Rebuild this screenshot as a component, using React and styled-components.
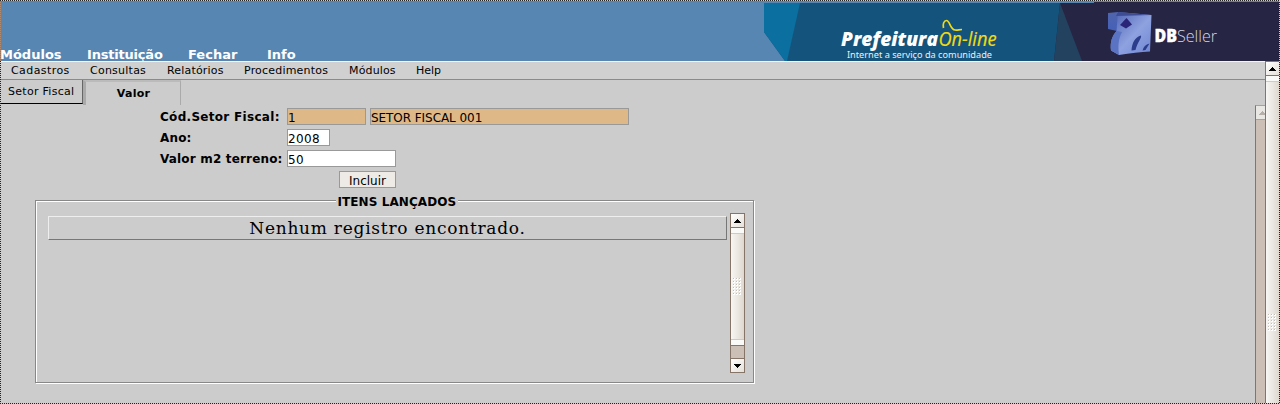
import React from "react";
import styled, { createGlobalStyle } from "styled-components";

const Global = createGlobalStyle`
  * { box-sizing: border-box; }
  html, body { margin: 0; padding: 0; overflow: hidden; }
  body { font-family: "DejaVu Sans", sans-serif; color: #000; background: #ccc; }
`;

const Page = styled.div`
  position: relative;
  width: 1280px;
  height: 404px;
  display: flex;
  flex-direction: column;
  overflow: hidden;
  background: #ccc;
`;

const FocusFrame = styled.div`
  position: absolute;
  inset: 0;
  pointer-events: none;
  --dots: #222 0 1px, #ccc 1px 2px;
  background:
    repeating-linear-gradient(90deg, var(--dots)) 0 0 / 100% 1px no-repeat,
    repeating-linear-gradient(90deg, var(--dots)) 0 100% / 100% 1px no-repeat,
    repeating-linear-gradient(180deg, #b08a70 0 1px, #5786b2 1px 2px) 0 0 / 1px 61px no-repeat,
    repeating-linear-gradient(180deg, var(--dots)) 0 61px / 1px 343px no-repeat,
    repeating-linear-gradient(180deg, var(--dots)) 100% 0 / 1px 100% no-repeat;
`;

const Header = styled.header`
  display: flex;
  justify-content: space-between;
  height: 61px;
  background: #5786b2;
`;

const TopNav = styled.nav`
  display: flex;
  align-items: flex-end;
`;

const TopLink = styled.a`
  width: ${(p) => p.$width}px;
  height: 14px;
  font-size: 13px;
  font-weight: bold;
  line-height: 15px;
  color: #fff;
  white-space: nowrap;
  letter-spacing: ${(p) => p.$track || 0}px;
`;

const BannerArt = styled.svg`
  display: block;
  width: 516px;
  height: 61px;
`;

const Body = styled.div`
  display: flex;
  flex: 1;
  min-height: 0;
`;

const Main = styled.main`
  flex: 1;
  min-width: 0;
  display: flex;
  flex-direction: column;
`;

const MenuBar = styled.nav`
  display: flex;
  height: 19px;
  padding-left: 11px;
  background: #d0d0d0;
  border-top: 1px solid #f4f4f4;
  border-bottom: 1px solid #8a8a8a;
`;

const MenuItem = styled.a`
  width: ${(p) => p.$width}px;
  font-size: 11px;
  line-height: 17px;
  white-space: nowrap;
  letter-spacing: ${(p) => p.$track || 0}px;
`;

const Tabs = styled.div`
  display: flex;
  height: 25px;
`;

const Tab = styled.div`
  width: 83px;
  height: 24px;
  padding-left: 8px;
  font-size: 11px;
  line-height: 23px;
  letter-spacing: 0.28px;
  white-space: nowrap;
  border-right: 1px solid #666;
  border-bottom: 1px solid #000;
`;

const ActiveTab = styled(Tab)`
  width: 98px;
  height: 25px;
  padding: 0 0 0 1px;
  text-align: center;
  font-weight: bold;
  line-height: 23px;
  border-top: 2px solid #bbb;
  border-left: 3px solid #aaa;
  border-right: 1px solid #aaa;
  border-bottom: 0;
`;

const Frame = styled.section`
  display: flex;
  flex: 1;
  min-height: 0;
`;

const FrameContent = styled.div`
  flex: 1;
  padding: 3px 0 0 35px;
`;

const Form = styled.div`
  display: grid;
  grid-template-columns: 127px auto;
  row-gap: 4px;
  padding-left: 125px;
`;

const Label = styled.label`
  height: 17px;
  font-size: 12px;
  font-weight: bold;
  line-height: 19px;
  white-space: nowrap;
  letter-spacing: ${(p) => p.$track || 0}px;
`;

const Fields = styled.div`
  display: flex;
  gap: 4px;
`;

const Field = styled.input`
  width: ${(p) => p.$width}px;
  height: 17px;
  margin: 0;
  padding: 2px 0 0 0;
  border: 1px solid #999;
  border-radius: 0;
  outline: 0;
  font: 12px "DejaVu Sans", sans-serif;
  letter-spacing: ${(p) => p.$track || 0}px;
  color: #000;
  background: ${(p) => (p.$locked ? "#deb887" : "#fff")};
`;

const Submit = styled.button`
  width: 57px;
  height: 17px;
  margin: 0 0 0 52px;
  padding: 1px 0 0;
  border: 1px solid #999;
  background: #eeebe7;
  font: 12px/16px "DejaVu Sans", sans-serif;
  color: #000;
`;

const Items = styled.fieldset`
  display: flex;
  width: 719px;
  height: 190px;
  min-width: 0;
  margin: 5px 0 0;
  padding: 5px 8px 9px 12px;
  border: 1px solid #888;
  box-shadow: 1px 1px 0 #fff, inset 1px 1px 0 #fff;
`;

const Legend = styled.legend`
  margin: 0 auto;
  width: 122px;
  padding: 0 0 0 2px;
  height: 15px;
  font-size: 12px;
  font-weight: bold;
  line-height: 18px;
  letter-spacing: 0.08px;
  white-space: nowrap;
  background: #ccc;
`;

const ItemsRow = styled.div`
  width: 679px;
  height: 24px;
  margin: 3px 3px 0 0;
  border: 1px solid;
  border-color: #eee #777 #777 #eee;
  font: 17px/22px "DejaVu Serif", serif;
  letter-spacing: 0.75px;
  text-align: center;
`;

const Scrollbar = styled.div`
  display: flex;
  flex-direction: column;
  width: 15px;
  height: ${(p) => p.$height}px;
  flex: none;
  overflow: hidden;
  border: 1px solid #857568;
  background: #ccc0b6;
`;

const OuterScrollbar = styled(Scrollbar)`
  border-bottom: 0;
`;

const FrameScrollbar = styled(Scrollbar)`
  width: 10px;
  border-right: 0;
  border-bottom: 0;
  border-top-color: #aaa096;
`;

const Arrow = styled.div`
  flex: none;
  display: flex;
  align-items: center;
  justify-content: center;
  width: 13px;
  height: ${(p) => (p.$down ? 14 : 13)}px;
  border-top: ${(p) => (p.$down ? "1px solid #857568" : "0")};
  background: linear-gradient(135deg, #fff, #e5e0d9);
`;

const DisabledArrow = styled(Arrow)`
  height: 14px;
  border-bottom: 1px solid #aaa096;
  background: #e9e7e3;
`;

const Thumb = styled.div`
  flex: none;
  display: flex;
  justify-content: center;
  width: 13px;
  height: ${(p) => p.$height}px;
  padding-top: ${(p) => p.$grip}px;
  border: solid #857568;
  border-width: 1px 0;
  background:
    linear-gradient(#fafaf8, #fafaf8) 0 0 / 100% 5px no-repeat,
    linear-gradient(#cfcac3, #cfcac3) 0 5px / 100% 1px no-repeat,
    linear-gradient(#fafaf8, #fafaf8) 0 100% / 100% 5px no-repeat,
    linear-gradient(#cfcac3, #cfcac3) 0 calc(100% - 5px) / 100% 1px no-repeat,
    linear-gradient(90deg, #f8f7f5, #ded8cf);
`;

const Spacer = styled.div`
  flex: 1;
`;

const Triangle = ({ down, muted }) => (
  <svg width="7" height="4" viewBox="0 0 7 4" shapeRendering="crispEdges">
    <path
      d={down ? "M0 0h7v1h-1v1h-1v1h-1v1h-1v-1h-1v-1h-1v-1h-1z" : "M3 0h1v1h1v1h1v1h1v1h-7v-1h1v-1h1v-1h1z"}
      fill={muted ? "#b5afa7" : "#000"}
    />
  </svg>
);

const Grip = () => (
  <svg width="9" height="18" viewBox="0 0 9 18" shapeRendering="crispEdges">
    {[0, 3, 6, 9, 12, 15].map((y) =>
      [0, 3, 6].map((x) => (
        <g key={`${x}-${y}`}>
          <rect x={x} y={y} width="2" height="2" fill="#fff" />
          <rect x={x} y={y} width="1" height="1" fill="#c4beb6" />
        </g>
      ))
    )}
  </svg>
);

const Banner = () => (
  <BannerArt viewBox="764 0 516 61">
    <defs>
      <linearGradient id="cube" x1="0" y1="0" x2="1" y2="1">
        <stop offset="0" stopColor="#4a5fb0" />
        <stop offset=".55" stopColor="#8ea2e0" />
        <stop offset="1" stopColor="#6f86d2" />
      </linearGradient>
      <linearGradient id="cubeSide" x1="0" y1="0" x2="0" y2="1">
        <stop offset="0" stopColor="#5065ad" />
        <stop offset="1" stopColor="#4560b8" />
      </linearGradient>
    </defs>
    <path d="M764 3H1062V61H785L764 32Z" fill="#14547c" />
    <path d="M764 3H800L787 61H785L764 32Z" fill="#0b6f9f" />
    <path d="M1060 3H1094V2H1280V61H1054Z" fill="#262543" />
    <path d="M1060 3L1082 61H1054Z" fill="#234260" />
    <g fontFamily="'Open Sans', sans-serif" fontStyle="italic">
      <text x="841" y="46" fontSize="19" fontWeight="800" fill="#fff" textLength="97" lengthAdjust="spacingAndGlyphs">Prefeitura</text>
      <text x="938.5" y="46" fontSize="20" fill="#f2db12" stroke="#f2db12" strokeWidth=".2" textLength="58" lengthAdjust="spacingAndGlyphs">On-line</text>
    </g>
    <path d="M943.5 28C942.5 24 944 20.5 946.5 20.5C950 20.5 950 29.5 955 30C958 30.3 959 29.5 962 29.5" fill="none" stroke="#f2db12" strokeWidth="1.7" />
    <text x="847" y="57.5" fontFamily="'Noto Sans', sans-serif" fontSize="9" fill="#e8f0f5" textLength="145" lengthAdjust="spacingAndGlyphs">Internet a serviço da comunidade</text>
    <path d="M1108 13L1118 12L1122 17L1117 31L1108 29Z" fill="url(#cubeSide)" />
    <path d="M1118 12L1151.500 15L1150 51.500Q1136 52 1119 55L1111 50.500C1110 42 1112 36 1116.500 31Z" fill="url(#cube)" />
    <path d="M1111 50.500C1110 42 1112 36 1116.500 31L1122 32C1118 39 1118 47 1119 55Z" fill="#5a73c2" />
    <path d="M1118 12L1151.500 15L1116 16Z" fill="#3d4c94" />
    <path d="M1120 25L1126.500 18L1132 24.500L1126 28.500Z" fill="#2b2579" />
    <path d="M1131.500 50.500C1132 43 1135 37 1141 35.500C1142 38 1137.500 42 1135.500 50ZM1142.500 50.500C1143.500 47 1145.500 44.500 1149.500 43.500L1145.500 50Z" fill="#2c3d8c" />
    <g fontFamily="'Open Sans', sans-serif">
      <text x="1154.500" y="42" fontSize="17.500" fontWeight="800" fill="#fff" stroke="#fff" strokeWidth=".4" textLength="22.500" lengthAdjust="spacingAndGlyphs">DB</text>
      <text x="1177" y="42" fontSize="17" fontWeight="300" fill="#d6d7e2" textLength="40" lengthAdjust="spacingAndGlyphs">Seller</text>
    </g>
  </BannerArt>
);

export default function App() {
  return (
    <Page>
      <Global />
      <Header>
        <TopNav>
          <TopLink $width={87}>Módulos</TopLink>
          <TopLink $width={101} $track={-0.2}>Instituição</TopLink>
          <TopLink $width={79}>Fechar</TopLink>
          <TopLink $width={60}>Info</TopLink>
        </TopNav>
        <Banner />
      </Header>
      <Body>
        <Main>
          <MenuBar>
            <MenuItem $width={79} $track={0.42}>Cadastros</MenuItem>
            <MenuItem $width={77} $track={0.24}>Consultas</MenuItem>
            <MenuItem $width={77} $track={0.18}>Relatórios</MenuItem>
            <MenuItem $width={105} $track={0.2}>Procedimentos</MenuItem>
            <MenuItem $width={67} $track={0.15}>Módulos</MenuItem>
            <MenuItem $width={40}>Help</MenuItem>
          </MenuBar>
          <Tabs>
            <Tab>Setor Fiscal</Tab>
            <ActiveTab>Valor</ActiveTab>
          </Tabs>
          <Frame>
            <FrameContent>
              <Form>
                <Label $track={0.3}>Cód.Setor Fiscal:</Label>
                <Fields>
                  <Field $width={79} $locked readOnly value="1" />
                  <Field $width={259} $locked $track={-0.06} readOnly value="SETOR FISCAL 001" />
                </Fields>
                <Label $track={0.15}>Ano:</Label>
                <Fields>
                  <Field $width={43} $track={0.35} defaultValue="2008" />
                </Fields>
                <Label $track={0.17}>Valor m2 terreno:</Label>
                <Fields>
                  <Field $width={109} $track={0.35} defaultValue="50" />
                </Fields>
                <span />
                <Submit>Incluir</Submit>
              </Form>
              <Items>
                <Legend>ITENS LANÇADOS</Legend>
                <ItemsRow>Nenhum registro encontrado.</ItemsRow>
                <Scrollbar $height={160}>
                  <Arrow><Triangle /></Arrow>
                  <Thumb $height={119} $grip={50}><Grip /></Thumb>
                  <Spacer />
                  <Arrow $down><Triangle down /></Arrow>
                </Scrollbar>
              </Items>
            </FrameContent>
            <FrameScrollbar $height={299}>
              <DisabledArrow><Triangle muted /></DisabledArrow>
            </FrameScrollbar>
          </Frame>
        </Main>
        <OuterScrollbar $height={343}>
          <Arrow><Triangle /></Arrow>
          <Thumb $height={500} $grip={238}><Grip /></Thumb>
        </OuterScrollbar>
      </Body>
      <FocusFrame />
    </Page>
  );
}
